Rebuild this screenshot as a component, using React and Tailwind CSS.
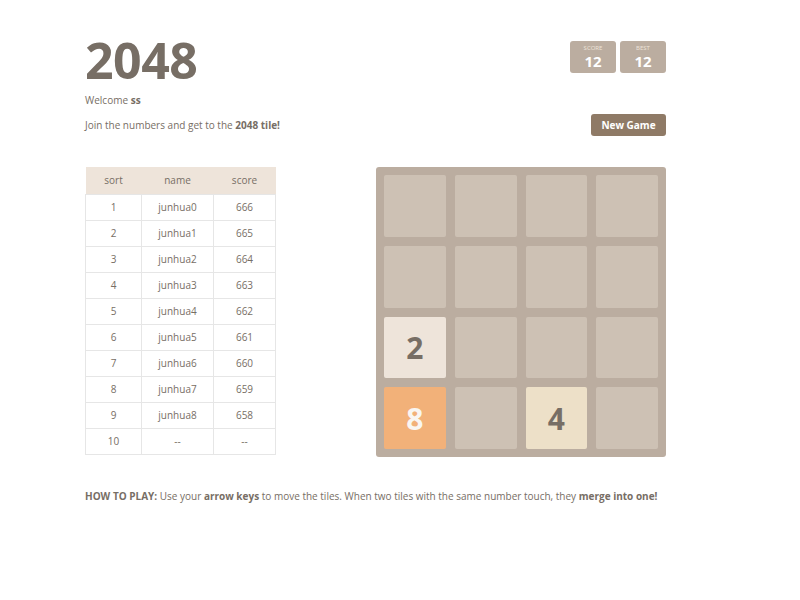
import React from "react";

const RANKS = [
  ["1", "junhua0", "666"],
  ["2", "junhua1", "665"],
  ["3", "junhua2", "664"],
  ["4", "junhua3", "663"],
  ["5", "junhua4", "662"],
  ["6", "junhua5", "661"],
  ["7", "junhua6", "660"],
  ["8", "junhua7", "659"],
  ["9", "junhua8", "658"],
  ["10", "--", "--"],
];

// 0 = empty cell
const BOARD = [
  [0, 0, 0, 0],
  [0, 0, 0, 0],
  [2, 0, 0, 0],
  [8, 0, 4, 0],
];

const TILE_STYLE = {
  0: "bg-[#cdc1b4]",
  2: "bg-[#eee4da] text-[#776e65]",
  4: "bg-[#ede0c8] text-[#776e65]",
  8: "bg-[#f2b179] text-[#f9f6f2]",
};

const ScoreBox = ({ label, value }) => (
  <div className="w-[46px] h-[32px] bg-[#bbada0] rounded-[3px] flex flex-col items-center justify-center">
    <span className="text-[6px] leading-[7px] uppercase text-[#eee4da]">{label}</span>
    <span className="text-[15px] leading-[16px] font-bold text-white mt-[1px]">{value}</span>
  </div>
);

export default function App() {
  return (
    <div
      className="w-[800px] h-[600px] bg-white text-[#776e65]"
      style={{ fontFamily: '"Open Sans", "Noto Sans", sans-serif' }}
    >
      <div className="w-[581px] ml-[85px] pt-[35px]">
        {/* 头部 */}
        <div className="flex justify-between">
          <div>
            <h1 className="text-[50px] font-bold leading-[50px] tracking-[-0.5px]">2048</h1>
            <p className="text-[10px] leading-[12px] mt-[9px] mb-[1px]">
              Welcome <b>ss</b>
            </p>
          </div>
          <div className="flex gap-[4px] mt-[6px] h-[32px]">
            <ScoreBox label="Score" value="12" />
            <ScoreBox label="Best" value="12" />
          </div>
        </div>

        <div className="flex justify-between items-center mt-[7px]">
          <p className="text-[10px] leading-[12px]">
            Join the numbers and get to the <b>2048 tile!</b>
          </p>
          <button className="w-[75px] h-[22px] bg-[#8f7a66] text-white text-[10px] font-bold rounded-[3px]">
            New Game
          </button>
        </div>

        {/* 排行榜 + 棋盘 */}
        <div className="flex justify-between items-start mt-[31px]">
          <table className="w-[191px] text-[10px] border-collapse">
            <thead>
              <tr className="bg-[#eee4da] h-[27px]">
                <th className="w-[56px] font-normal">sort</th>
                <th className="w-[72px] font-normal">name</th>
                <th className="font-normal">score</th>
              </tr>
            </thead>
            <tbody>
              {RANKS.map((r) => (
                <tr key={r[0]} className="h-[26px]">
                  {r.map((c, i) => (
                    <td key={i} className="text-center border border-[#e6e6e6]">
                      {c}
                    </td>
                  ))}
                </tr>
              ))}
            </tbody>
          </table>

          <div className="w-[290px] h-[290px] bg-[#bbada0] rounded-[3px] p-[8px] grid grid-cols-4 grid-rows-4 gap-[9px]">
            {BOARD.flat().map((v, i) => (
              <div
                key={i}
                className={`rounded-[2px] flex items-center justify-center text-[30px] font-bold ${TILE_STYLE[v]}`}
              >
                {v > 0 ? v : ""}
              </div>
            ))}
          </div>
        </div>

        <p className="text-[10px] mt-[32px]">
          <b>HOW TO PLAY:</b> Use your <b>arrow keys</b> to move the tiles. When two tiles with the same number touch, they{" "}
          <b>merge into one!</b>
        </p>
      </div>
    </div>
  );
}
